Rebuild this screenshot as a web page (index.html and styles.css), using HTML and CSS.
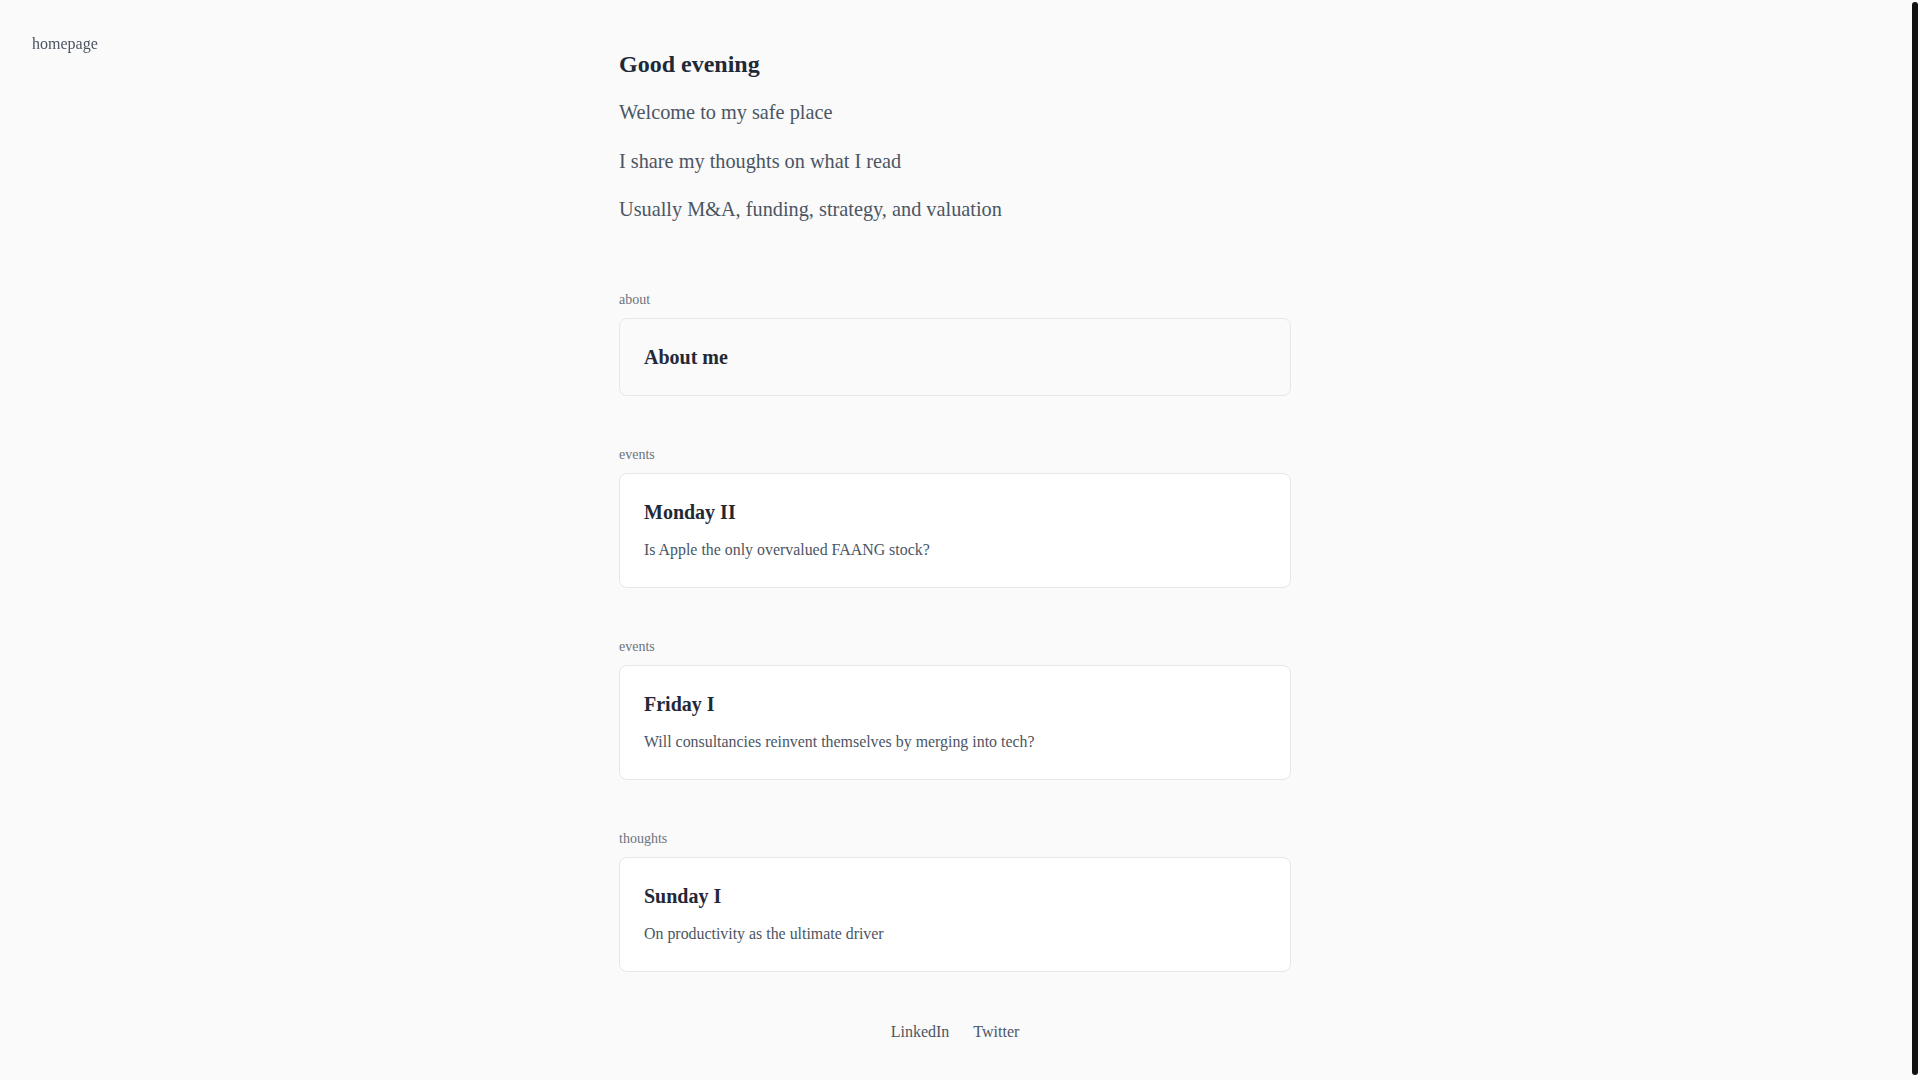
FILE: index.html
```html
<!DOCTYPE html>
<html lang="en">
<head>
<meta charset="utf-8">
<title>homepage</title>
<link rel="stylesheet" href="styles.css">
</head>
<body>
<nav class="topnav"><a class="navlink" href="#">homepage</a></nav>
<main class="page">
  <header class="hero">
    <h1 class="hero-title">Good evening</h1>
    <p class="hero-line">Welcome to my safe place</p>
    <p class="hero-line">I share my thoughts on what I read</p>
    <p class="hero-line">Usually M&amp;A, funding, strategy, and valuation</p>
  </header>
  <div class="feed">
    <section class="group">
      <div class="group-label">about</div>
      <a class="card card-plain" href="#">
        <h2 class="card-title">About me</h2>
      </a>
    </section>
    <section class="group">
      <div class="group-label">events</div>
      <a class="card" href="#">
        <h2 class="card-title">Monday II</h2>
        <p class="card-sub">Is Apple the only overvalued FAANG stock?</p>
      </a>
    </section>
    <section class="group">
      <div class="group-label">events</div>
      <a class="card" href="#">
        <h2 class="card-title">Friday I</h2>
        <p class="card-sub">Will consultancies reinvent themselves by merging into tech?</p>
      </a>
    </section>
    <section class="group">
      <div class="group-label">thoughts</div>
      <a class="card" href="#">
        <h2 class="card-title">Sunday I</h2>
        <p class="card-sub">On productivity as the ultimate driver</p>
      </a>
    </section>
  </div>
  <footer class="links">
    <a class="footlink" href="#">LinkedIn</a>
    <a class="footlink" href="#">Twitter</a>
  </footer>
</main>
<div class="scroll-thumb" aria-hidden="true"></div>
</body>
</html>
```
FILE: styles.css
```css
html {
  background: #fafafa;
}
body {
  margin: 0;
  padding-right: 10px;
  background: #fafafa;
  font-family: "Liberation Serif", "Times New Roman", serif;
  color: #4b5563;
}
a {
  text-decoration: none;
  color: inherit;
}
.topnav {
  position: fixed;
  top: 32px;
  left: 32px;
  font-size: 16px;
  line-height: 24px;
}
.navlink {
  color: #4b5563;
}
.scroll-thumb {
  position: fixed;
  top: 2px;
  bottom: 5px;
  right: 2px;
  width: 6px;
  border-radius: 3px;
  background: #111111;
}
.page {
  max-width: 672px;
  margin: 0 auto;
  padding: 48px 0 40px;
}
.hero-title {
  margin: 0 0 18px;
  font-size: 24px;
  line-height: 32px;
  font-weight: 700;
  color: #1f2937;
}
.hero-line {
  margin: 0 0 20.5px;
  font-size: 20.3px;
  line-height: 28px;
  color: #4b5563;
}
.hero-line:last-child {
  margin-bottom: 0;
}
.feed {
  margin-top: 66px;
  display: flex;
  flex-direction: column;
  gap: 48px;
}
.group-label {
  font-size: 14px;
  line-height: 21px;
  color: #6b7280;
  margin-bottom: 8px;
}
.card {
  display: block;
  border: 1px solid #e5e7eb;
  border-radius: 8px;
  padding: 24px;
  background: #ffffff;
}
.card-plain {
  background: #fafafa;
}
.card-title {
  margin: 0;
  font-size: 20px;
  line-height: 28px;
  font-weight: 700;
  color: #1f2937;
}
.card-sub {
  margin: 12px 0 1px;
  font-size: 15.9px;
  line-height: 24px;
  color: #4b5563;
}
.links {
  margin-top: 48px;
  display: flex;
  justify-content: center;
  gap: 24px;
  font-size: 16px;
  line-height: 24px;
}
.footlink {
  color: #4b5563;
}
```
